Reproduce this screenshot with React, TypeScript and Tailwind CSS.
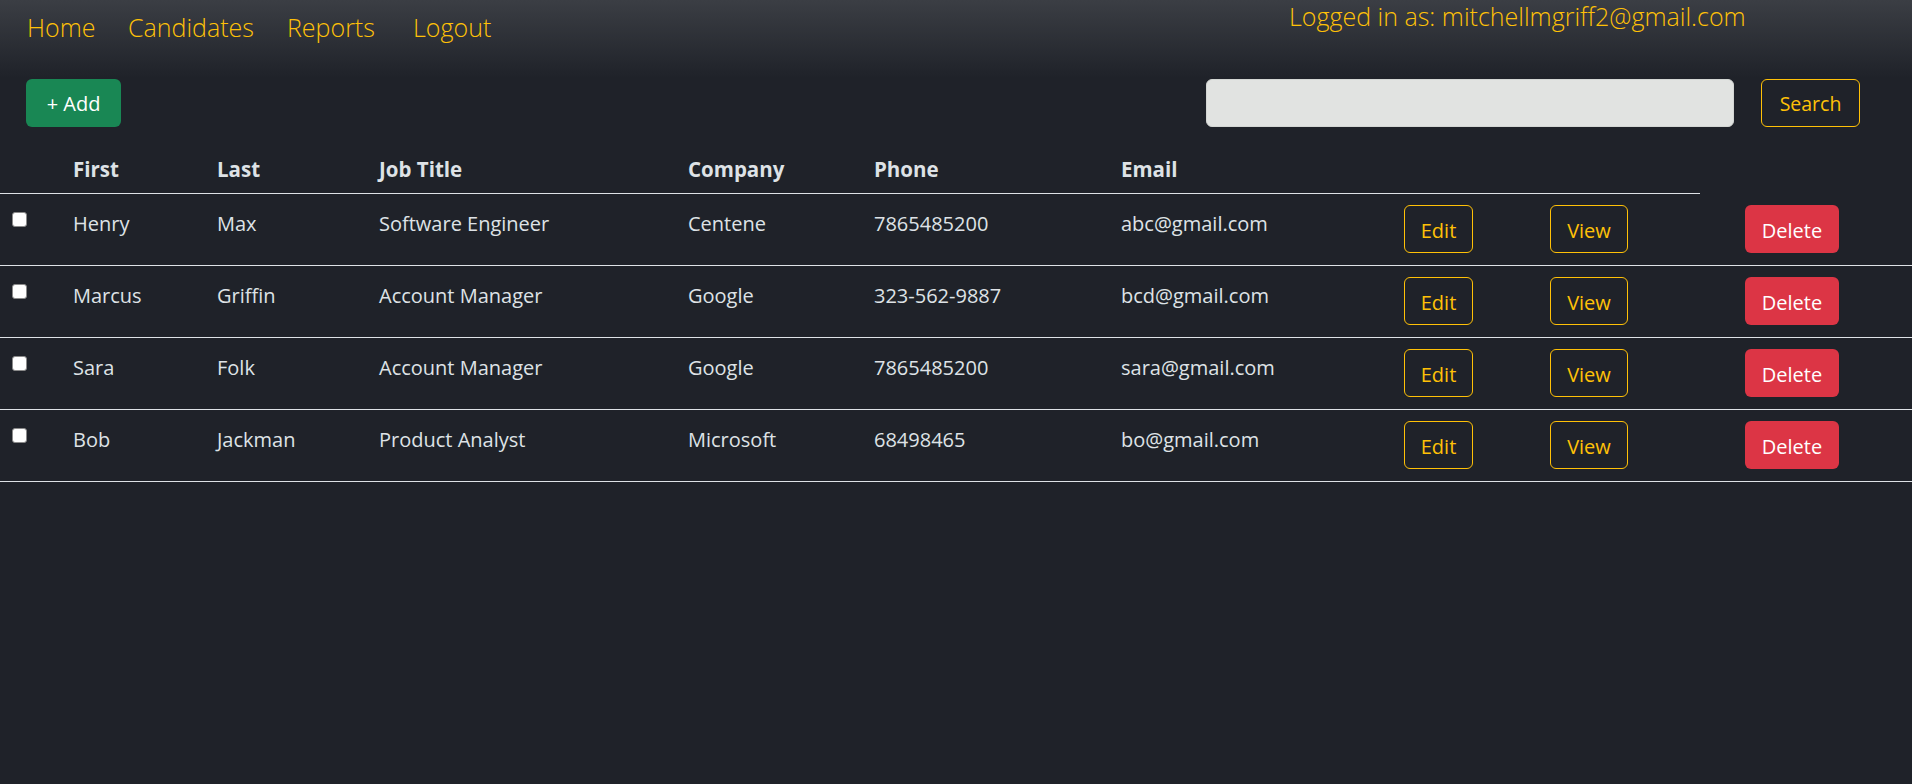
const candidates = [
  { first: "Henry", last: "Max", title: "Software Engineer", company: "Centene", phone: "7865485200", email: "abc@gmail.com" },
  { first: "Marcus", last: "Griffin", title: "Account Manager", company: "Google", phone: "323-562-9887", email: "bcd@gmail.com" },
  { first: "Sara", last: "Folk", title: "Account Manager", company: "Google", phone: "7865485200", email: "sara@gmail.com" },
  { first: "Bob", last: "Jackman", title: "Product Analyst", company: "Microsoft", phone: "68498465", email: "bo@gmail.com" },
];

const cols = "grid grid-cols-[63px_144px_162px_309px_186px_247px_284px_145px_160px_1fr]";

function NavBar() {
  return (
    <nav className="flex h-[79px] pl-[27px]">
      <div className="flex w-[1262px] shrink-0 pt-[9px] text-[25px] font-light leading-[36px] text-[#ffc107]">
        <a className="w-[101px]">Home</a>
        <a className="w-[159px]">Candidates</a>
        <a className="w-[126px]">Reports</a>
        <a>Logout</a>
      </div>
      <p className="pt-[1px] text-[25px] font-light leading-[30px] text-[#ffc107]">
        Logged in as: mitchellmgriff2@gmail.com
      </p>
    </nav>
  );
}

function Toolbar() {
  return (
    <div className="flex h-[48px] items-stretch pl-[26px] pr-[52px]">
      <button className="w-[95px] rounded-[6px] bg-[#198754] pt-[2px] text-[20px] text-white">+ Add</button>
      <input className="ml-auto w-[528px] rounded-[6px] border border-[#d3d6d3] bg-[#e1e3e1] px-3 outline-none" />
      <button className="ml-[27px] w-[99px] rounded-[6px] border border-[#ffc107] pt-[2px] text-[19.5px] text-[#ffc107]">
        Search
      </button>
    </div>
  );
}

export default function App() {
  return (
    <div
      className="min-h-screen bg-[#1f2229] bg-[linear-gradient(180deg,#3b3e44_0px,#1f2229_78px)] text-[#dee2e6]"
      style={{ fontFamily: '"Segoe UI", "Open Sans", "Noto Sans", sans-serif' }}
    >
      <NavBar />
      <Toolbar />

      <div className="mt-[16px]">
        <div className="grid w-[1700px] grid-cols-[63px_144px_162px_309px_186px_247px_284px_145px_160px] border-b border-[#dee2e6] pt-[12px] pb-[9px] text-[20.5px] font-bold leading-[29px]">
          <div />
          <div className="pl-[10px]">First</div>
          <div className="pl-[10px]">Last</div>
          <div className="pl-[10px]">Job Title</div>
          <div className="pl-[10px]">Company</div>
          <div className="pl-[10px]">Phone</div>
          <div className="pl-[10px]">Email</div>
          <div />
          <div />
        </div>

        {candidates.map((c) => (
          <div key={c.email} className={`${cols} h-[72px] items-start border-b border-[#dee2e6] text-[20px] leading-[29px]`}>
            <div className="pl-[12px] pt-[18px]">
              <input type="checkbox" className="block h-[15px] w-[15px] appearance-none rounded-[3px] border border-[#8a8a8a] bg-white" />
            </div>
            <div className="pl-[10px] pt-[15px]">{c.first}</div>
            <div className="pl-[10px] pt-[15px]">{c.last}</div>
            <div className="pl-[10px] pt-[15px]">{c.title}</div>
            <div className="pl-[10px] pt-[15px]">{c.company}</div>
            <div className="pl-[10px] pt-[15px]">{c.phone}</div>
            <div className="pl-[10px] pt-[15px]">{c.email}</div>
            <div className="pl-[9px] pt-[11px]">
              <button className="h-[48px] w-[69px] rounded-[6px] border border-[#ffc107] pt-[2px] text-[#ffc107]">Edit</button>
            </div>
            <div className="pl-[10px] pt-[11px]">
              <button className="h-[48px] w-[78px] rounded-[6px] border border-[#ffc107] pt-[2px] text-[#ffc107]">View</button>
            </div>
            <div className="pl-[45px] pt-[11px]">
              <button className="h-[48px] w-[94px] rounded-[6px] bg-[#dc3545] pt-[2px] text-white">Delete</button>
            </div>
          </div>
        ))}
      </div>
    </div>
  );
}
